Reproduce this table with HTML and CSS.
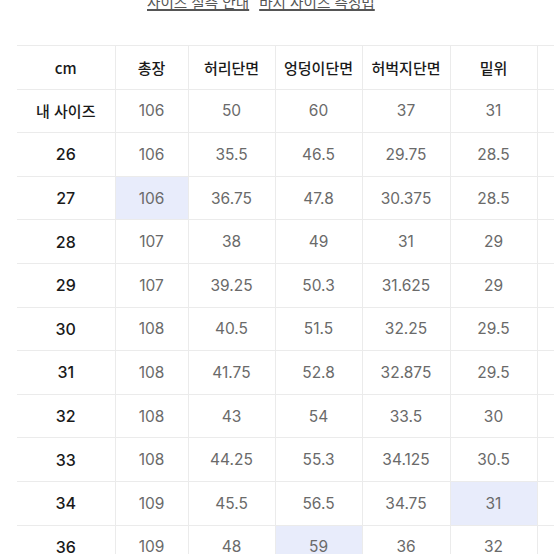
FILE: index.html
```html
<!DOCTYPE html>
<html lang="ko">
<head>
<meta charset="utf-8">
<link rel="stylesheet" href="styles.css">
</head>
<body>
<div class="links">
  <a class="link">사이즈 실측 안내</a>
  <a class="link">바지 사이즈 측정법</a>
</div>
<div class="wrap">
<table class="size">
  <colgroup>
    <col class="c0"><col class="c1"><col class="c2"><col class="c3"><col class="c4"><col class="c5"><col class="c6">
  </colgroup>
  <thead>
    <tr><th>cm</th><th>총장</th><th>허리단면</th><th>엉덩이단면</th><th>허벅지단면</th><th>밑위</th><th></th></tr>
  </thead>
  <tbody>
    <tr><th>내 사이즈</th><td>106</td><td>50</td><td>60</td><td>37</td><td>31</td><td></td></tr>
    <tr><th>26</th><td>106</td><td>35.5</td><td>46.5</td><td>29.75</td><td>28.5</td><td></td></tr>
    <tr><th>27</th><td class="hl">106</td><td>36.75</td><td>47.8</td><td>30.375</td><td>28.5</td><td></td></tr>
    <tr><th>28</th><td>107</td><td>38</td><td>49</td><td>31</td><td>29</td><td></td></tr>
    <tr><th>29</th><td>107</td><td>39.25</td><td>50.3</td><td>31.625</td><td>29</td><td></td></tr>
    <tr><th>30</th><td>108</td><td>40.5</td><td>51.5</td><td>32.25</td><td>29.5</td><td></td></tr>
    <tr><th>31</th><td>108</td><td>41.75</td><td>52.8</td><td>32.875</td><td>29.5</td><td></td></tr>
    <tr><th>32</th><td>108</td><td>43</td><td>54</td><td>33.5</td><td>30</td><td></td></tr>
    <tr><th>33</th><td>108</td><td>44.25</td><td>55.3</td><td>34.125</td><td>30.5</td><td></td></tr>
    <tr><th>34</th><td>109</td><td>45.5</td><td>56.5</td><td>34.75</td><td class="hl">31</td><td></td></tr>
    <tr><th>36</th><td>109</td><td>48</td><td class="hl">59</td><td>36</td><td>32</td><td></td></tr>
  </tbody>
</table>
</div>
</body>
</html>
```

FILE: styles.css
```css
html, body {
  margin: 0;
  padding: 0;
  background: #fff;
  overflow: hidden;
  width: 554px;
  height: 554px;
}
body {
  font-family: "Noto Sans CJK KR", "Noto Sans", sans-serif;
  color: #222;
}
.links {
  display: flex;
  gap: 10px;
  padding-left: 147px;
  height: 12px;
  overflow: hidden;
  align-items: flex-end;
}
.link {
  font-size: 14.6px;
  line-height: 16px;
  color: #555;
  text-decoration: underline;
  text-decoration-thickness: 1.5px;
  text-underline-offset: 1px;
  margin-bottom: 2px;
  white-space: nowrap;
}
.wrap {
  padding-top: 33px;
  padding-left: 17px;
  width: 700px;
}
.size {
  border-collapse: collapse;
  table-layout: fixed;
  width: 616px;
}
.c0 { width: 98px; }
.c1 { width: 73px; }
.c2 { width: 87px; }
.c3 { width: 87px; }
.c4 { width: 88px; }
.c5 { width: 87px; }
.c6 { width: 96px; }
.size th, .size td {
  border: 1px solid #ebebeb;
  height: 42.6px;
  padding: 0;
  text-align: center;
  vertical-align: middle;
  font-size: 15px;
  white-space: nowrap;
}
.size tr > :first-child {
  border-left: none;
}
.size th {
  font-weight: 500;
  color: #1a1a1a;
}
.size td {
  font-family: "Inter", "Noto Sans CJK KR", sans-serif;
  font-weight: 400;
  color: #6a6a6a;
  font-size: 15.5px;
}
.size tbody th {
  font-family: "Inter", "Noto Sans CJK KR", sans-serif;
  font-size: 16px;
}
.size tbody tr:first-child th {
  font-family: "Noto Sans CJK KR", sans-serif;
  font-size: 15px;
}
.size td.hl {
  background: #e8ecfb;
}
```
